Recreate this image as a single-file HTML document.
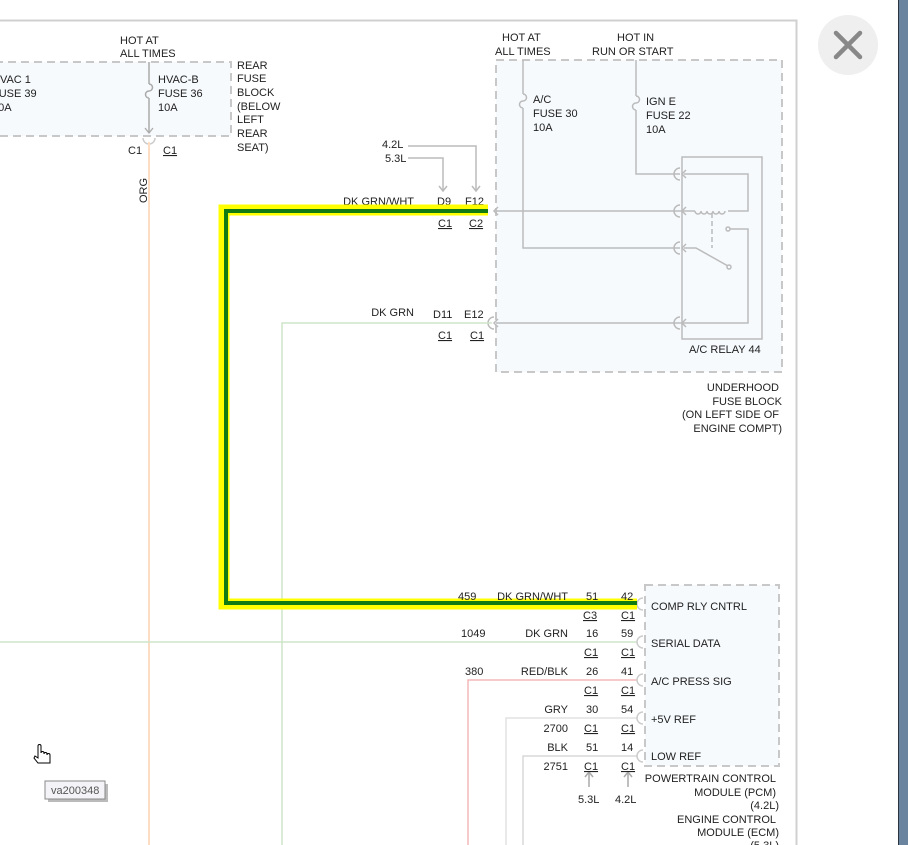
<!DOCTYPE html>
<html><head><meta charset="utf-8"><style>
html,body{margin:0;padding:0;background:#fff;width:908px;height:845px;overflow:hidden}
svg{display:block}
text{font-family:"Liberation Sans",sans-serif;font-size:11px;fill:#222}
.u{text-decoration:underline}
</style></head><body>
<svg width="908" height="845" viewBox="0 0 908 845">
<rect x="898" y="0" width="10" height="845" fill="#6a84a0"/>
<line x1="898.5" y1="0" x2="898.5" y2="845" stroke="#2a3340"/>
<path d="M0 20.5H796.5V845" fill="none" stroke="#d0d0d0" stroke-width="2"/>
<circle cx="848" cy="45" r="30" fill="#efefef"/>
<path d="M836 33L860 57M860 33L836 57" stroke="#888" stroke-width="4.5" stroke-linecap="round"/>

<!-- rear fuse block -->
<rect x="-5" y="62" width="236" height="74" fill="#f6fafd" stroke="#c8c8c8" stroke-width="2" stroke-dasharray="8,5"/>
<text x="120" y="44">HOT AT</text><text x="120" y="57">ALL TIMES</text>
<path d="M149 62V84 M149 98V132" stroke="#aaa" stroke-width="1.5"/>
<path d="M149 84a3 3 0 0 1 0 7a3 3 0 0 0 0 7" fill="none" stroke="#aaa" stroke-width="1.5"/>
<path d="M145 128l4 5l4-5" fill="none" stroke="#aaa" stroke-width="1.3"/>
<path d="M143 138a6 6 0 0 0 12 0" fill="none" stroke="#ccc" stroke-width="1.5"/>
<line x1="149" y1="142" x2="149" y2="845" stroke="#fddcc4" stroke-width="2"/>
<text x="-8" y="83">HVAC 1</text><text x="-8" y="97">FUSE 39</text><text x="-8" y="111">10A</text>
<text x="158" y="83">HVAC-B</text><text x="158" y="97">FUSE 36</text><text x="158" y="111">10A</text>
<text x="237" y="69">REAR</text><text x="237" y="82">FUSE</text><text x="237" y="96">BLOCK</text><text x="237" y="110">(BELOW</text><text x="237" y="123">LEFT</text><text x="237" y="137">REAR</text><text x="237" y="151">SEAT)</text>
<text x="128" y="154">C1</text><text x="163" y="154" class="u">C1</text>
<text x="147" y="203" transform="rotate(-90 147 203)">ORG</text>

<!-- underhood box -->
<rect x="496" y="60" width="286" height="312" fill="#f6fafd" stroke="#c8c8c8" stroke-width="2" stroke-dasharray="8,5"/>
<text x="502" y="41">HOT AT</text><text x="495" y="55">ALL TIMES</text>
<text x="617" y="41">HOT IN</text><text x="592" y="55">RUN OR START</text>
<g stroke="#bbb" stroke-width="1.5" fill="none">
<path d="M523 60V94 M523 108V248H680"/>
<path d="M523 94a3 3 0 0 1 0 7a3 3 0 0 0 0 7"/>
<path d="M636 60V96 M636 110V174H680"/>
<path d="M636 96a3 3 0 0 1 0 7a3 3 0 0 0 0 7"/>
<rect x="682" y="157" width="80" height="182"/>
<path d="M684 174H748V211H728"/>
<path d="M496 211H695"/>
<path d="M695 211a3 3 0 0 0 6 0a3 3 0 0 0 6 0a3 3 0 0 0 6 0a3 3 0 0 0 6 0 a3 3 0 0 0 6 0"/>
<path d="M712 213V248" stroke-dasharray="5,3"/>
<path d="M684 248H696L728 266"/>
<circle cx="729" cy="267" r="2"/><circle cx="728" cy="229" r="2"/>
<path d="M730 229H748V323H496"/>
<path d="M498 207l-4 4l4 4M686 170l-4 4l4 4M686 207l-4 4l4 4M686 244l-4 4l4 4M686 319l-4 4l4 4M498 319l-4 4l4 4"/>
<path d="M680 168a6 6 0 0 0 0 12M680 205a6 6 0 0 0 0 12M680 242a6 6 0 0 0 0 12M680 317a6 6 0 0 0 0 12M494 317a6 6 0 0 0 0 12"/>
<path d="M408 146H476V190M408 158H443V190"/>
<path d="M472 186l4 5l4-5M439 186l4 5l4-5"/>
</g>
<text x="533" y="103">A/C</text><text x="533" y="117">FUSE 30</text><text x="533" y="131">10A</text>
<text x="646" y="105">IGN E</text><text x="646" y="119">FUSE 22</text><text x="646" y="133">10A</text>
<text x="689" y="353">A/C RELAY 44</text>
<g text-anchor="end"><text x="779" y="391">UNDERHOOD</text><text x="782" y="405">FUSE BLOCK</text><text x="779" y="418">(ON LEFT SIDE OF</text><text x="782" y="432">ENGINE COMPT)</text></g>
<text x="382" y="148">4.2L</text><text x="385" y="162">5.3L</text>
<text x="414" y="205" text-anchor="end">DK GRN/WHT</text>
<text x="437" y="205">D9</text><text x="465" y="205">F12</text>
<text x="438" y="227" class="u">C1</text><text x="469" y="227" class="u">C2</text>
<text x="414" y="316" text-anchor="end">DK GRN</text>
<text x="433" y="318">D11</text><text x="464" y="318">E12</text>
<text x="438" y="339" class="u">C1</text><text x="470" y="339" class="u">C1</text>
<path d="M492 323H282V845" fill="none" stroke="#cfe5c8" stroke-width="1.5"/>

<!-- PCM -->
<rect x="645" y="585" width="134" height="181" fill="#f6fafd" stroke="#c8c8c8" stroke-width="2" stroke-dasharray="8,5"/>
<path d="M0 642H637" stroke="#cfe5c8" stroke-width="1.5"/>
<path d="M637 680H468V845" fill="none" stroke="#f4b8b8" stroke-width="1.5"/>
<path d="M637 718H506V845" fill="none" stroke="#e2e2e2" stroke-width="1.5"/>
<path d="M637 756H523V845" fill="none" stroke="#d8d8d8" stroke-width="1.5"/>
<g fill="none" stroke="#ccc" stroke-width="1.5">
<path d="M643 598a6 6 0 0 0 0 12M643 636a6 6 0 0 0 0 12M643 674a6 6 0 0 0 0 12M643 712a6 6 0 0 0 0 12M643 750a6 6 0 0 0 0 12"/>
<path d="M589 787V773M628 787V773M585 777l4-5l4 5M624 777l4-5l4 5" stroke="#aaa"/>
</g>
<!-- highlighted wire -->
<path d="M488 210H224V604H637" fill="none" stroke="#ffff00" stroke-width="11"/>
<path d="M488 211H226V603H637" fill="none" stroke="#127a12" stroke-width="4"/>

<text x="458" y="600">459</text><text x="568" y="600" text-anchor="end">DK GRN/WHT</text><text x="586" y="600">51</text><text x="621" y="600">42</text>
<text x="583" y="619" class="u">C3</text><text x="621" y="619" class="u">C1</text>
<text x="461" y="637">1049</text><text x="568" y="637" text-anchor="end">DK GRN</text><text x="586" y="637">16</text><text x="621" y="637">59</text>
<text x="584" y="656" class="u">C1</text><text x="621" y="656" class="u">C1</text>
<text x="465" y="675">380</text><text x="568" y="675" text-anchor="end">RED/BLK</text><text x="586" y="675">26</text><text x="621" y="675">41</text>
<text x="584" y="694" class="u">C1</text><text x="621" y="694" class="u">C1</text>
<text x="568" y="713" text-anchor="end">GRY</text><text x="586" y="713">30</text><text x="621" y="713">54</text>
<text x="568" y="732" text-anchor="end">2700</text><text x="584" y="732" class="u">C1</text><text x="621" y="732" class="u">C1</text>
<text x="568" y="751" text-anchor="end">BLK</text><text x="586" y="751">51</text><text x="621" y="751">14</text>
<text x="568" y="770" text-anchor="end">2751</text><text x="584" y="770" class="u">C1</text><text x="621" y="770" class="u">C1</text>
<text x="651" y="610">COMP RLY CNTRL</text><text x="651" y="647">SERIAL DATA</text><text x="651" y="685">A/C PRESS SIG</text><text x="651" y="723">+5V REF</text><text x="651" y="760">LOW REF</text>
<text x="578" y="803">5.3L</text><text x="615" y="803">4.2L</text>
<g text-anchor="end"><text x="776" y="782">POWERTRAIN CONTROL</text><text x="776" y="796">MODULE (PCM)</text><text x="779" y="809">(4.2L)</text><text x="776" y="823">ENGINE CONTROL</text><text x="779" y="836">MODULE (ECM)</text><text x="779" y="849">(5.3L)</text></g>

<!-- cursor + tooltip -->
<path d="M38 746v12l-3-2-1 2 4 5h12v-8c0-2-3-2-3 0v-1c0-2-3-2-3 0v-1c0-2-3-2-3 0v-7c0-2-3-2-3 0z" fill="#fff" stroke="#000" stroke-width="1"/>
<rect x="48" y="784" width="60" height="18" fill="#bbb"/>
<rect x="45" y="781" width="60" height="18" fill="#f4f4f8" stroke="#888"/>
<text x="51" y="794" style="fill:#555">va200348</text>
</svg>
</body></html>
